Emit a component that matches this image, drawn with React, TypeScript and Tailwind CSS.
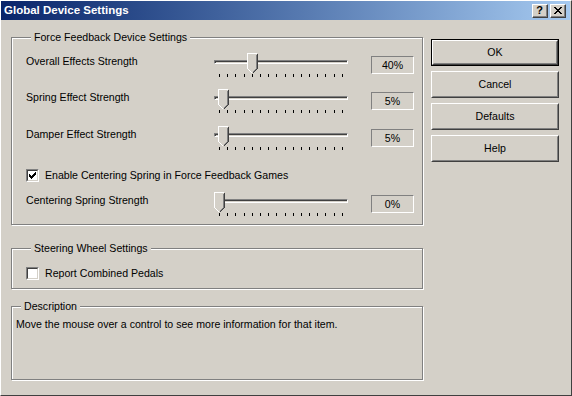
import React from "react";

const FACE = "#d4d0c8";

function Thumb() {
  return (
    <svg width="11" height="21" viewBox="0 0 11 21" shapeRendering="crispEdges">
      <polygon points="0,0 11,0 11,16 5.5,21 0,16" fill={FACE} />
      <path d="M0.5,15.5 V0.5 H9.5" stroke="#fff" fill="none" />
      <path d="M0.5,15.5 L5.5,20.5" stroke="#fff" fill="none" />
      <path d="M9.5,1.5 V15.5 L5.5,19.5" stroke="#808080" fill="none" />
      <path d="M10.5,0.5 V15.5 L5.5,20.5" stroke="#404040" fill="none" />
    </svg>
  );
}

function Slider({ value }: { value: number }) {
  const ticks = Array.from({ length: 16 });
  return (
    <div className="relative w-[134px] h-[26px] shrink-0">
      <div className="absolute left-0 right-0 top-[7px] h-[4px] border border-t-[#808080] border-l-[#808080] border-b-white border-r-white shadow-[inset_1px_1px_0_#404040]" />
      <div className="absolute top-0" style={{ left: Math.round(value * 0.82) }}>
        <Thumb />
      </div>
      <div className="absolute top-[21px] left-[5px] w-[124px] flex justify-between items-start">
        {ticks.map((_, i) => (
          <div key={i} className="w-px h-[3px] bg-black" />
        ))}
      </div>
    </div>
  );
}

function SliderRow({ label, value, className }: { label: string; value: number; className?: string }) {
  return (
    <div className={`flex items-start ${className ?? ""}`}>
      <div className="w-[188px] shrink-0 mt-[2px] leading-[13px]">{label}</div>
      <Slider value={value} />
      <div className="ml-[23px] mt-[3px] w-[43px] h-[18px] border border-t-[#808080] border-l-[#808080] border-b-white border-r-white flex items-center justify-center leading-[13px]">
        {value}%
      </div>
    </div>
  );
}

function CheckBox({ checked }: { checked?: boolean }) {
  const cols = [2, 3, 4, 3, 2, 1, 0];
  return (
    <div className="w-[13px] h-[13px] shrink-0 border border-t-[#808080] border-l-[#808080] border-b-white border-r-white">
      <div className="w-[11px] h-[11px] border border-t-[#404040] border-l-[#404040] border-b-[#d4d0c8] border-r-[#d4d0c8] bg-white">
        {checked && (
          <svg width="9" height="9" viewBox="0 0 9 9" shapeRendering="crispEdges">
            {cols.map((r, x) => (
              <rect key={x} x={x + 1} y={r + 1} width="1" height="3" fill="#000" />
            ))}
          </svg>
        )}
      </div>
    </div>
  );
}

function Group({ title, className, children }: { title: string; className?: string; children?: React.ReactNode }) {
  return (
    <div className={`border border-[#808080] shadow-[inset_1px_1px_0_#fff,1px_1px_0_#fff] ${className ?? ""}`}>
      <div className="-mt-[7px] ml-[5px] px-[3px] w-fit bg-[#d4d0c8] leading-[13px]">{title}</div>
      {children}
    </div>
  );
}

function Btn({ label, primary }: { label: string; primary?: boolean }) {
  return (
    <div className={`w-[128px] h-[27px] ${primary ? "border border-black" : ""}`}>
      <div className="w-full h-full border border-t-white border-l-white border-b-[#404040] border-r-[#404040]">
        <div className="w-full h-full border border-t-[#d4d0c8] border-l-[#d4d0c8] border-b-[#808080] border-r-[#808080] flex items-center justify-center leading-[13px]">
          {label}
        </div>
      </div>
    </div>
  );
}

function CaptionBtn({ children }: { children: React.ReactNode }) {
  return (
    <div className="w-[16px] h-[14px] bg-[#d4d0c8] border border-t-white border-l-white border-b-[#404040] border-r-[#404040]">
      <div className="w-full h-full border-b border-r border-b-[#808080] border-r-[#808080] flex items-center justify-center">
        {children}
      </div>
    </div>
  );
}

export default function App() {
  return (
    <div className="w-[572px] h-[396px] bg-[#d4d0c8] border-t border-l border-t-white border-l-white border-r border-b border-r-[#404040] border-b-[#404040] text-[10.6px] text-black font-['Liberation_Sans',Arial,sans-serif] flex flex-col overflow-hidden">
      {/* caption */}
      <div className="h-[19px] mr-px shrink-0 flex items-center bg-gradient-to-r from-[#0a246a] to-[#a6caf0] pl-[3px] pr-[4px]">
        <span className="text-white font-bold leading-[13px] text-[11.5px]">Global Device Settings</span>
        <div className="ml-auto flex gap-[2px]">
          <CaptionBtn>
            <span className="font-bold text-[11px] leading-[10px]">?</span>
          </CaptionBtn>
          <CaptionBtn>
            <svg width="8" height="7" viewBox="0 0 8 7" shapeRendering="crispEdges">
              <path d="M0,0 L7,7 M1,0 L8,7 M7,0 L0,7 M8,0 L1,7" stroke="#000" strokeWidth="1" />
            </svg>
          </CaptionBtn>
        </div>
      </div>

      {/* body */}
      <div className="flex pl-[10px]">
        <div className="w-[412px] shrink-0 flex flex-col">
          <Group title="Force Feedback Device Settings" className="mt-[17px] h-[188px] pl-[14px]">
            <SliderRow label="Overall Effects Strength" value={40} className="mt-[9px]" />
            <SliderRow label="Spring Effect Strength" value={5} className="mt-[10px]" />
            <SliderRow label="Damper Effect Strength" value={5} className="mt-[11px]" />
            <div className="flex items-center mt-[17px] leading-[13px]">
              <CheckBox checked />
              <span className="ml-[6px]">Enable Centering Spring in Force Feedback Games</span>
            </div>
            <SliderRow label="Centering Spring Strength" value={0} className="mt-[10px]" />
          </Group>

          <Group title="Steering Wheel Settings" className="mt-[23px] h-[41px] pl-[14px]">
            <div className="flex items-center mt-[12px] leading-[13px]">
              <CheckBox />
              <span className="ml-[6px]">Report Combined Pedals</span>
            </div>
          </Group>

          <Group title="Description" className="mt-[17px] h-[74px] pl-[4px]">
            <div className="mt-[5px] leading-[13px]">
              Move the mouse over a control to see more information for that item.
            </div>
          </Group>
        </div>

        <div className="ml-[8px] mt-[19px] flex flex-col gap-[5px]">
          <Btn label="OK" primary />
          <Btn label="Cancel" />
          <Btn label="Defaults" />
          <Btn label="Help" />
        </div>
      </div>
    </div>
  );
}
